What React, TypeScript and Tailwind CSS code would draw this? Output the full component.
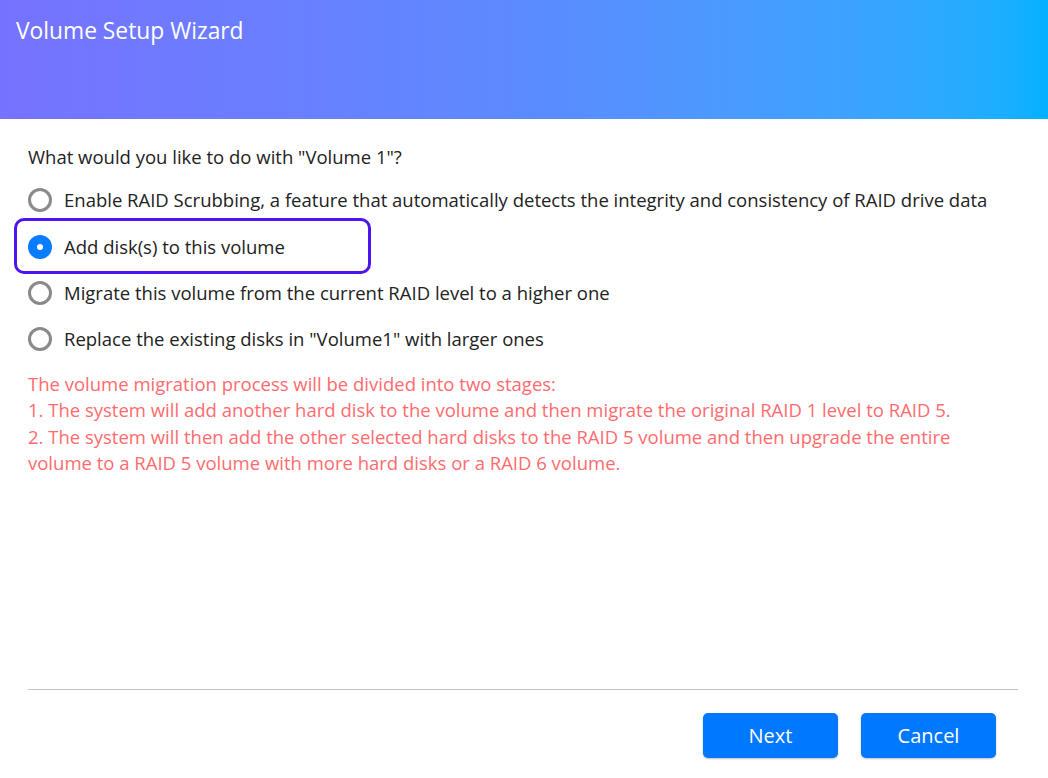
const OPTIONS = [
  'Enable RAID Scrubbing, a feature that automatically detects the integrity and consistency of RAID drive data',
  'Add disk(s) to this volume',
  'Migrate this volume from the current RAID level to a higher one',
  'Replace the existing disks in "Volume1" with larger ones',
];

function Radio({ checked }: { checked: boolean }) {
  if (checked) {
    return (
      <span className="flex h-[24px] w-[24px] shrink-0 items-center justify-center rounded-full bg-[#0a7cff]">
        <span className="h-[6px] w-[6px] rounded-full bg-white" />
      </span>
    );
  }
  return <span className="h-[24px] w-[24px] shrink-0 rounded-full border-[3px] border-[#8a8a8a] bg-white" />;
}

export default function App() {
  const selected = 1;
  return (
    <div
      className="flex h-[778px] w-[1048px] flex-col bg-white text-[#222]"
      style={{ fontFamily: '"Open Sans", "Noto Sans", sans-serif' }}
    >
      <div className="h-[119px] shrink-0 bg-gradient-to-r from-[#7672ff] via-[#5c8aff] to-[#02b1ff] px-4 pt-[16px]">
        <h1 className="text-[22.8px] leading-[30px] text-white">Volume Setup Wizard</h1>
      </div>

      <div className="flex flex-1 flex-col px-[28px] pt-[25px]">
        <p className="text-[18.5px] leading-[26px]">What would you like to do with "Volume 1"?</p>

        <div className="mt-[7px] flex flex-col">
          {OPTIONS.map((opt, i) => (
            <div key={opt} className="relative flex h-[46.4px] items-center gap-[12px]">
              {i === selected && (
                <span className="pointer-events-none absolute -top-[5px] -bottom-[4px] -left-[14px] w-[357px] rounded-[10px] border-[3px] border-[#4c14f0]" />
              )}
              <Radio checked={i === selected} />
              <span className="whitespace-nowrap text-[18.5px]">{opt}</span>
            </div>
          ))}
        </div>

        <div className="mt-[8px] text-[18.5px] leading-[26.5px] text-[#ff6b6e]">
          <p>The volume migration process will be divided into two stages:</p>
          <p>1. The system will add another hard disk to the volume and then migrate the original RAID 1 level to RAID 5.</p>
          <p>
            2. The system will then add the other selected hard disks to the RAID 5 volume and then upgrade the entire
            <br />
            volume to a RAID 5 volume with more hard disks or a RAID 6 volume.
          </p>
        </div>

        <div className="mt-auto mb-[20px] mr-[2px] border-t border-[#c4c4c4] pt-[23px]">
          <div className="flex justify-end gap-[23px] pr-[22px]">
            <button className="h-[45px] w-[135px] rounded-[5px] bg-[#0078ff] text-[20px] text-white shadow-[0_1px_2px_rgba(0,0,0,0.25)]">
              Next
            </button>
            <button className="h-[45px] w-[135px] rounded-[5px] bg-[#0078ff] text-[20px] text-white shadow-[0_1px_2px_rgba(0,0,0,0.25)]">
              Cancel
            </button>
          </div>
        </div>
      </div>
    </div>
  );
}
